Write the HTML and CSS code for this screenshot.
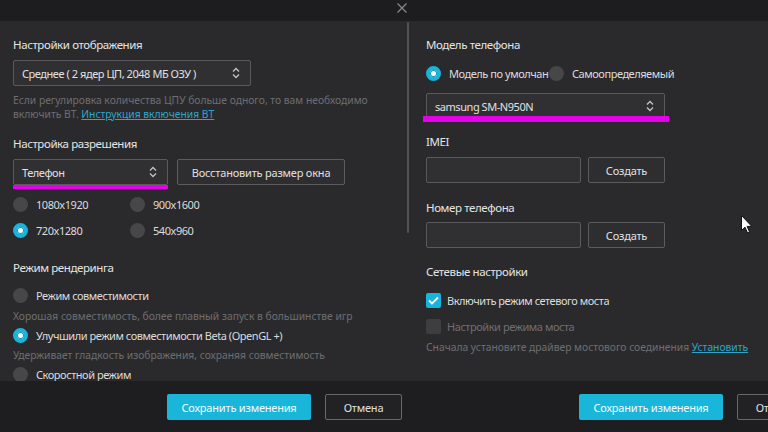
FILE: index.html
```html
<!DOCTYPE html>
<html lang="ru">
<head>
<meta charset="utf-8">
<title>Настройки</title>
<link rel="stylesheet" href="styles.css">
</head>
<body>
<div class="screen">
  <section class="dialog">
    <header class="topbar">
      <svg class="close" width="10" height="10" viewBox="0 0 10 10"><path d="M0.5 0.5 L9.5 9.5 M9.5 0.5 L0.5 9.5" stroke="#8a8a8c" stroke-width="1.2" fill="none"/></svg>
    </header>
    <div class="body">
      <div class="content">
        <h2 class="title">Настройки отображения</h2>
        <div class="select select-wide">
          <span>Среднее ( 2 ядер ЦП, 2048 МБ ОЗУ )</span>
          <svg class="chev" width="8" height="12" viewBox="0 0 8 12"><path d="M1 4.5 L4 1.5 L7 4.5 M1 7.5 L4 10.5 L7 7.5" stroke="#c4c4c4" stroke-width="1.3" fill="none"/></svg>
        </div>
        <p class="hint hint-block">Если регулировка количества ЦПУ больше одного, то вам необходимо<br>включить ВТ. <a class="link">Инструкция включения ВТ</a></p>

        <h2 class="title title-2">Настройка разрешения</h2>
        <div class="row row-res">
          <div class="select select-narrow mark-left">
            <span>Телефон</span>
            <svg class="chev" width="8" height="12" viewBox="0 0 8 12"><path d="M1 4.5 L4 1.5 L7 4.5 M1 7.5 L4 10.5 L7 7.5" stroke="#c4c4c4" stroke-width="1.3" fill="none"/></svg>
          </div>
          <button class="btn btn-ghost btn-restore">Восстановить размер окна</button>
        </div>
        <div class="radio-grid">
          <label class="radio"><span class="dot"></span>1080x1920</label>
          <label class="radio"><span class="dot"></span>900x1600</label>
          <label class="radio"><span class="dot on"></span>720x1280</label>
          <label class="radio"><span class="dot"></span>540x960</label>
        </div>

        <h2 class="title title-3">Режим рендеринга</h2>
        <div class="render">
          <label class="radio line"><span class="dot"></span>Режим совместимости</label>
          <p class="hint line">Хорошая совместимость, более плавный запуск в большинстве игр</p>
          <label class="radio line"><span class="dot on"></span>Улучшили режим совместимости Beta (OpenGL +)</label>
          <p class="hint line">Удерживает гладкость изображения, сохраняя совместимость</p>
          <label class="radio line"><span class="dot"></span>Скоростной режим</label>
        </div>
      </div>
      <div class="scroll-track"><div class="scroll-thumb"></div></div>
    </div>
    <footer class="footer">
      <button class="btn btn-primary">Сохранить изменения</button>
      <button class="btn btn-cancel">Отмена</button>
    </footer>
  </section>

  <section class="dialog">
    <header class="topbar"></header>
    <div class="body">
      <div class="content content-right">
        <h2 class="title">Модель телефона</h2>
        <div class="row model-row">
          <label class="radio model-default"><span class="dot on"></span><span class="clip">Модель по умолчанию</span></label>
          <label class="radio"><span class="dot"></span>Самоопределяемый</label>
        </div>
        <div class="select select-model mark-right">
          <span>samsung SM-N950N</span>
          <svg class="chev" width="8" height="12" viewBox="0 0 8 12"><path d="M1 4.5 L4 1.5 L7 4.5 M1 7.5 L4 10.5 L7 7.5" stroke="#c4c4c4" stroke-width="1.3" fill="none"/></svg>
        </div>

        <h2 class="title title-imei">IMEI</h2>
        <div class="row input-row">
          <div class="input"></div>
          <button class="btn btn-ghost btn-create">Создать</button>
        </div>

        <h2 class="title title-phone">Номер телефона</h2>
        <div class="row input-row input-row-2">
          <div class="input"></div>
          <button class="btn btn-ghost btn-create">Создать</button>
        </div>

        <h2 class="title title-net">Сетевые настройки</h2>
        <label class="check check-1"><span class="box on"><svg width="11" height="9" viewBox="0 0 11 9"><path d="M1 4.5 L4 7.5 L10 1.5" stroke="#fff" stroke-width="1.8" fill="none"/></svg></span>Включить режим сетевого моста</label>
        <label class="check check-2 disabled"><span class="box"></span>Настройки режима моста</label>
        <p class="hint hint-net">Сначала установите драйвер мостового соединения <a class="link">Установить</a></p>
      </div>
    </div>
    <footer class="footer">
      <button class="btn btn-primary">Сохранить изменения</button>
      <button class="btn btn-cancel">Отмена</button>
    </footer>
  </section>

  <svg class="cursor" width="12" height="19" viewBox="0 0 12 19"><path d="M0.5 0.5 L0.5 15.5 L4 12.2 L6.6 18 L8.6 17.1 L6.1 11.4 L10.8 11.4 Z" fill="#fff" stroke="#111" stroke-width="1"/></svg>
</div>
</body>
</html>
```

FILE: styles.css
```css
* { box-sizing: border-box; }
html, body { margin: 0; padding: 0; background: #1c1c1e; }
body { font-family: "Noto Sans", "Open Sans", sans-serif; color: #dcdcdc; }

.screen {
  position: relative;
  width: 768px;
  height: 432px;
  display: flex;
  overflow: hidden;
}

.dialog {
  flex: 0 0 412px;
  width: 412px;
  height: 432px;
  display: flex;
  flex-direction: column;
}

.topbar {
  height: 21px;
  background: #1d1d1f;
  display: flex;
  justify-content: flex-end;
  align-items: flex-start;
  padding: 3px 5px 0 0;
}

.body {
  height: 360px;
  background: #2a2a2d;
  display: flex;
  overflow: hidden;
}

.content {
  flex: 1;
  padding: 16px 0 0 13px;
  min-width: 0;
}
.content-right { padding-left: 14px; }

.scroll-track {
  width: 4px;
  margin-right: 1px;
  padding-top: 1px;
}
.scroll-thumb {
  width: 2px;
  height: 211px;
  background: #515154;
  border-radius: 1px;
}

.title {
  margin: 0;
  font-size: 11.5px;
  letter-spacing: -0.4px;
  font-weight: 400;
  line-height: 16px;
  color: #e4e4e4;
}
.title-2 { margin-top: 15px; }
.title-3 { margin-top: 17px; }
.title-imei { margin-top: 15px; }
.title-phone { margin-top: 17px; }
.title-net { margin-top: 16px; }

.select {
  position: relative;
  height: 26px;
  margin-top: 7px;
  border: 1px solid #5a5a5d;
  border-radius: 2px;
  background: #303033;
  display: flex;
  align-items: center;
  justify-content: space-between;
  padding: 0 10px 0 8px;
  font-size: 11px;
  letter-spacing: -0.45px;
  color: #e0e0e0;
}
.select-wide { width: 238px; }
.select-narrow { width: 155px; margin-top: 0; }
.select-model { width: 239px; margin-top: 10px; }

.mark-left::after, .mark-right::after {
  content: "";
  position: absolute;
  background: #e400ea;
}
.mark-left::after { left: -1px; top: 25px; width: 155px; height: 4px; }
.mark-right::after { left: -4px; top: 22px; width: 246px; height: 6px; }

.hint {
  margin: 0;
  font-size: 10.3px;
  line-height: 14px;
  color: #6e6e71;
}
.hint-block { margin-top: 7px; }
.link { color: #2aa6cc; text-decoration: underline; }

.row { display: flex; align-items: center; }
.row-res { margin-top: 7px; gap: 9px; }

.btn {
  font-family: inherit;
  font-size: 11px;
  letter-spacing: -0.2px;
  border-radius: 2px;
  cursor: default;
}
.btn-ghost {
  height: 26px;
  background: #2e2e31;
  border: 1px solid #5c5c5f;
  color: #e0e0e0;
  padding: 0;
}
.btn-restore { width: 168px; }
.btn-create { width: 77px; }

.radio-grid {
  margin-top: 6px;
  display: grid;
  grid-template-columns: 117px 117px;
  grid-auto-rows: 26px;
}
.radio {
  display: flex;
  align-items: center;
  gap: 8px;
  font-size: 11px;
  letter-spacing: -0.45px;
  color: #dcdcdc;
  white-space: nowrap;
}
.dot {
  flex: 0 0 15px;
  width: 15px;
  height: 15px;
  border-radius: 50%;
  background: #47474a;
}
.dot.on {
  background: #fff;
  border: 4.5px solid #18b4dc;
  box-shadow: 0 0 0 1px #128fb0 inset;
}

.render { margin-top: 10px; }
.line { height: 19.7px; display: flex; align-items: center; }

.model-row { margin-top: 10px; height: 20px; }
.model-default { width: 123px; overflow: hidden; }
.clip { overflow: hidden; }

.input-row { margin-top: 7px; gap: 7px; }
.input-row-2 { margin-top: 6px; }
.input {
  width: 155px;
  height: 26px;
  border: 1px solid #5a5a5d;
  border-radius: 2px;
  background: #303033;
}

.check {
  display: flex;
  align-items: center;
  gap: 6px;
  height: 20px;
  font-size: 11px;
  letter-spacing: -0.45px;
  color: #dcdcdc;
}
.check-1 { margin-top: 10px; }
.check-2 { margin-top: 6px; }
.check.disabled { color: #6e6e71; }
.box {
  width: 15px;
  height: 15px;
  border-radius: 2px;
  background: #3e3e41;
  display: flex;
  align-items: center;
  justify-content: center;
}
.box.on { background: #18b4dc; }
.hint-net { margin-top: 4px; }

.footer {
  flex: 1;
  background: #1e1e21;
  display: flex;
  align-items: flex-start;
  padding: 13px 0 0 167px;
  gap: 14px;
}
.btn-primary {
  width: 144px;
  height: 26px;
  background: #19b6da;
  border: none;
  color: #f4fbfd;
}
.btn-cancel {
  width: 77px;
  height: 26px;
  background: #222225;
  border: 1px solid #68686b;
  color: #e0e0e0;
}

.cursor {
  position: absolute;
  left: 741px;
  top: 215px;
}
```
